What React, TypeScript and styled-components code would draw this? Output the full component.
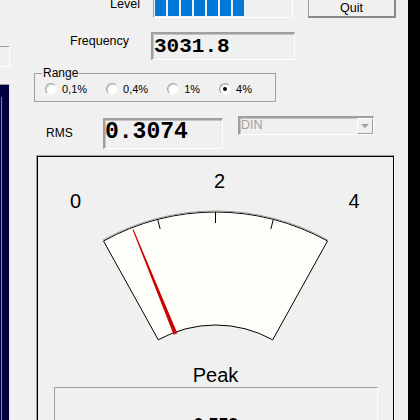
import styled, { createGlobalStyle } from "styled-components";

const GlobalStyle = createGlobalStyle`
  html, body {
    margin: 0;
    padding: 0;
    background: #f0f0f0;
  }
  body {
    font-family: "Liberation Sans", Arial, sans-serif;
    overflow: hidden;
  }
  * {
    box-sizing: border-box;
  }
`;

const Window = styled.div`
  width: 420px;
  height: 420px;
  overflow: hidden;
  display: flex;
  background: #f0f0f0;
  color: #000;
`;

const LeftEdge = styled.div`
  width: 10px;
  flex: none;
  display: flex;
  flex-direction: column;
`;

const CutField = styled.div`
  margin-top: 46px;
  height: 21px;
  border-top: 1px solid #a0a0a0;
  border-right: 1px solid #fff;
  border-bottom: 1px solid #fff;
`;

const NavyPanel = styled.div`
  margin-top: 17px;
  flex: 1;
  background: #000040;
  border-top: 1px solid #a0a0a0;
  border-right: 1px solid #e8e8e8;
  padding: 12px 0 0 1px;
`;

const NavyInner = styled.div`
  height: 100%;
  border-left: 1px solid #8080c0;
`;

const RightEdge = styled.div`
  width: 12px;
  flex: none;
  background: #000;
`;

const Main = styled.div`
  flex: 1;
  display: flex;
  flex-direction: column;
  margin-top: -8px;
`;

const Row = styled.div<{ $top: number }>`
  display: flex;
  align-items: flex-start;
  margin-top: ${(p) => p.$top}px;
`;

const Label = styled.div<{ $left?: number; $width: number; $top?: number; $align?: string; $size?: number }>`
  margin-left: ${(p) => p.$left ?? 0}px;
  width: ${(p) => p.$width}px;
  margin-top: ${(p) => p.$top ?? 0}px;
  text-align: ${(p) => p.$align ?? "left"};
  font-size: ${(p) => p.$size ?? 12.5}px;
  line-height: 14px;
  flex: none;
  white-space: nowrap;
`;

const LevelBar = styled.div`
  margin-left: 13px;
  width: 140px;
  height: 26px;
  flex: none;
  display: flex;
  gap: 2px;
  padding: 1px;
  border-top: 1px solid #a0a0a0;
  border-left: 1px solid #a0a0a0;
  border-right: 1px solid #fff;
  border-bottom: 1px solid #fff;
`;

const LevelBlock = styled.div`
  width: 11px;
  background: #0078d7;
`;

const QuitButton = styled.button`
  margin-left: 15px;
  width: 88px;
  height: 26px;
  flex: none;
  padding: 7px 0 0;
  background: #f0f0f0;
  border-top: 1px solid #a0a0a0;
  border-left: 1px solid #a0a0a0;
  border-right: 2px solid #8a8a8a;
  border-bottom: 2px solid #8a8a8a;
  font-family: "Liberation Sans", Arial, sans-serif;
  font-size: 12.5px;
  line-height: 14px;
  color: #000;
  text-align: center;
`;

const ReadOut = styled.div<{ $width: number; $height: number; $size: number; $line: number; $pad: number }>`
  width: ${(p) => p.$width}px;
  height: ${(p) => p.$height}px;
  flex: none;
  border-top: 2px solid #a0a0a0;
  border-left: 2px solid #a0a0a0;
  border-right: 1px solid #fff;
  border-bottom: 1px solid #fff;
  box-shadow: inset 1px 1px 0 #c4c4c4;
  padding: ${(p) => p.$pad}px 0 0 ${(p) => p.$pad}px;
  font-family: "Liberation Mono", "Courier New", monospace;
  font-weight: bold;
  font-size: ${(p) => p.$size}px;
  line-height: ${(p) => p.$line}px;
  color: #000;
  white-space: nowrap;
`;

const GroupBox = styled.fieldset`
  margin: 6px 0 0 24px;
  width: 242px;
  min-width: 0;
  border: 1px solid #a0a0a0;
  padding: 2px 0 5px 10px;
`;

const Caption = styled.legend`
  margin-left: -3px;
  padding: 0 1px;
  font-size: 12px;
  line-height: 14px;
`;

const RadioRow = styled.div`
  display: flex;
  gap: 19px;
  height: 14px;
  align-items: center;
`;

const RadioItem = styled.label`
  display: flex;
  align-items: center;
  gap: 5px;
  font-size: 11px;
  line-height: 14px;
`;

const RadioDot = styled.span<{ $checked?: boolean }>`
  width: 12px;
  height: 12px;
  flex: none;
  border-radius: 50%;
  background: #fff;
  border: 1px solid;
  border-color: #a0a0a0 #f4f4f4 #f4f4f4 #a0a0a0;
  box-shadow: inset 1px 1px 0 #d8d8d8;
  display: flex;
  align-items: center;
  justify-content: center;

  &::after {
    content: "";
    width: 4px;
    height: 4px;
    border-radius: 50%;
    background: ${(p) => (p.$checked ? "#000" : "transparent")};
  }
`;

const Combo = styled.div`
  margin-left: 15px;
  width: 136px;
  height: 19px;
  flex: none;
  display: flex;
  border-top: 2px solid #a0a0a0;
  border-left: 2px solid #a0a0a0;
  border-right: 1px solid #fff;
  border-bottom: 1px solid #fff;
  box-shadow: inset 1px 1px 0 #c4c4c4;
`;

const ComboText = styled.div`
  flex: 1;
  padding-left: 1px;
  font-size: 12.5px;
  line-height: 14px;
  color: #a0a0a0;
`;

const DropButton = styled.div`
  width: 16px;
  height: 16px;
  flex: none;
  background: #f0f0f0;
  border-top: 1px solid #fff;
  border-left: 1px solid #fff;
  border-right: 1px solid #a0a0a0;
  border-bottom: 1px solid #a0a0a0;
  display: flex;
  align-items: center;
  justify-content: center;

  &::after {
    content: "";
    width: 0;
    height: 0;
    border-left: 4px solid transparent;
    border-right: 4px solid transparent;
    border-top: 4px solid #a0a0a0;
  }
`;

const MeterPanel = styled.div`
  margin: 6px 0 0 26px;
  width: 359px;
  flex: 1;
  display: flex;
  flex-direction: column;
  border-top: 1px solid #a0a0a0;
  border-left: 1px solid #a0a0a0;
  border-right: 1px solid #fff;
  padding: 1px;
  box-shadow: inset 0 0 0 1px #000;
`;

const MeterTitle = styled.div`
  margin-top: 2px;
  text-align: center;
  font-size: 20px;
  line-height: 22px;
`;

const PeakBox = styled.div`
  margin: 1px 0 0 16px;
  width: 324px;
  height: 60px;
  flex: none;
  border-top: 1px solid #a0a0a0;
  border-left: 1px solid #a0a0a0;
  border-right: 1px solid #fff;
  padding-top: 26px;
  text-align: center;
  font-size: 18px;
  font-weight: bold;
  line-height: 22px;
`;

const CX = 177.5;
const CY = 286;
const R_OUT = 231;
const R_IN = 118;
const SPAN = 29;

function pt(r: number, deg: number) {
  const a = (deg * Math.PI) / 180;
  return [CX + r * Math.sin(a), CY - r * Math.cos(a)];
}

function Gauge() {
  const [olx, oly] = pt(R_OUT, -SPAN);
  const [orx, ory] = pt(R_OUT, SPAN);
  const [ilx, ily] = pt(R_IN, -SPAN);
  const [irx, iry] = pt(R_IN, SPAN);
  const [slx, sly] = pt(R_OUT + 1, -SPAN);
  const [srx, sry] = pt(R_OUT + 1, SPAN);
  const face = `M ${olx} ${oly} A ${R_OUT} ${R_OUT} 0 0 1 ${orx} ${ory} L ${irx} ${iry} A ${R_IN} ${R_IN} 0 0 0 ${ilx} ${ily} Z`;
  const ticks = [
    { deg: -14.5, len: 10 },
    { deg: 0, len: 11 },
    { deg: 14.5, len: 10 },
  ];

  // needle: thin at the scale, wider toward the pivot
  const top = [95, 72.5];
  const bot = [137.5, 177];
  const dx = bot[0] - top[0];
  const dy = bot[1] - top[1];
  const len = Math.hypot(dx, dy);
  const nx = dy / len;
  const ny = -dx / len;
  const needle = [
    [top[0] - 0.5 * nx, top[1] - 0.5 * ny],
    [top[0] + 0.5 * nx, top[1] + 0.5 * ny],
    [bot[0] + 2 * nx, bot[1] + 2 * ny],
    [bot[0] - 2 * nx, bot[1] - 2 * ny],
  ]
    .map((p) => p.join(","))
    .join(" ");

  return (
    <svg width="355" height="205" viewBox="0 0 355 205" style={{ display: "block" }}>
      <path d={face} fill="#fefef8" stroke="#000" strokeWidth="1" />
      <path
        d={`M ${slx} ${sly} A ${R_OUT + 1} ${R_OUT + 1} 0 0 1 ${srx} ${sry}`}
        fill="none"
        stroke="#9a9a9a"
        strokeWidth="1"
      />
      {ticks.map((t) => {
        const [x1, y1] = pt(R_OUT, t.deg);
        const [x2, y2] = pt(R_OUT - t.len, t.deg);
        return <line key={t.deg} x1={x1} y1={y1} x2={x2} y2={y2} stroke="#000" strokeWidth="1" />;
      })}
      <polygon points={needle} fill="#cc0000" />
      <g fontFamily="'Liberation Sans', Arial, sans-serif" fontSize="20" fill="#000" textAnchor="middle">
        <text x="37.5" y="51">0</text>
        <text x="181.5" y="31">2</text>
        <text x="316" y="51">4</text>
      </g>
    </svg>
  );
}

const ranges = ["0,1%", "0,4%", "1%", "4%"];

export default function App() {
  return (
    <>
      <GlobalStyle />
      <Window>
        <LeftEdge>
          <CutField />
          <NavyPanel>
            <NavyInner />
          </NavyPanel>
        </LeftEdge>
        <Main>
          <Row $top={0}>
            <Label $width={130} $top={5} $align="right">
              Level
            </Label>
            <LevelBar>
              {Array.from({ length: 7 }).map((_, i) => (
                <LevelBlock key={i} />
              ))}
            </LevelBar>
            <QuitButton>Quit</QuitButton>
          </Row>
          <Row $top={14}>
            <Label $left={60} $width={81} $top={2}>
              Frequency
            </Label>
            <ReadOut $width={144} $height={28} $size={21} $line={24} $pad={1}>
              3031.8
            </ReadOut>
          </Row>
          <GroupBox>
            <Caption>Range</Caption>
            <RadioRow>
              {ranges.map((r) => (
                <RadioItem key={r}>
                  <RadioDot $checked={r === "4%"} />
                  {r}
                </RadioItem>
              ))}
            </RadioRow>
          </GroupBox>
          <Row $top={14}>
            <Label $left={36} $width={57} $top={10} $size={12}>
              RMS
            </Label>
            <ReadOut $width={120} $height={31} $size={23} $line={24} $pad={0} style={{ marginTop: 2 }}>
              0.3074
            </ReadOut>
            <Combo>
              <ComboText>DIN</ComboText>
              <DropButton />
            </Combo>
          </Row>
          <MeterPanel>
            <Gauge />
            <MeterTitle>Peak</MeterTitle>
            <PeakBox>0.559</PeakBox>
          </MeterPanel>
        </Main>
        <RightEdge />
      </Window>
    </>
  );
}
